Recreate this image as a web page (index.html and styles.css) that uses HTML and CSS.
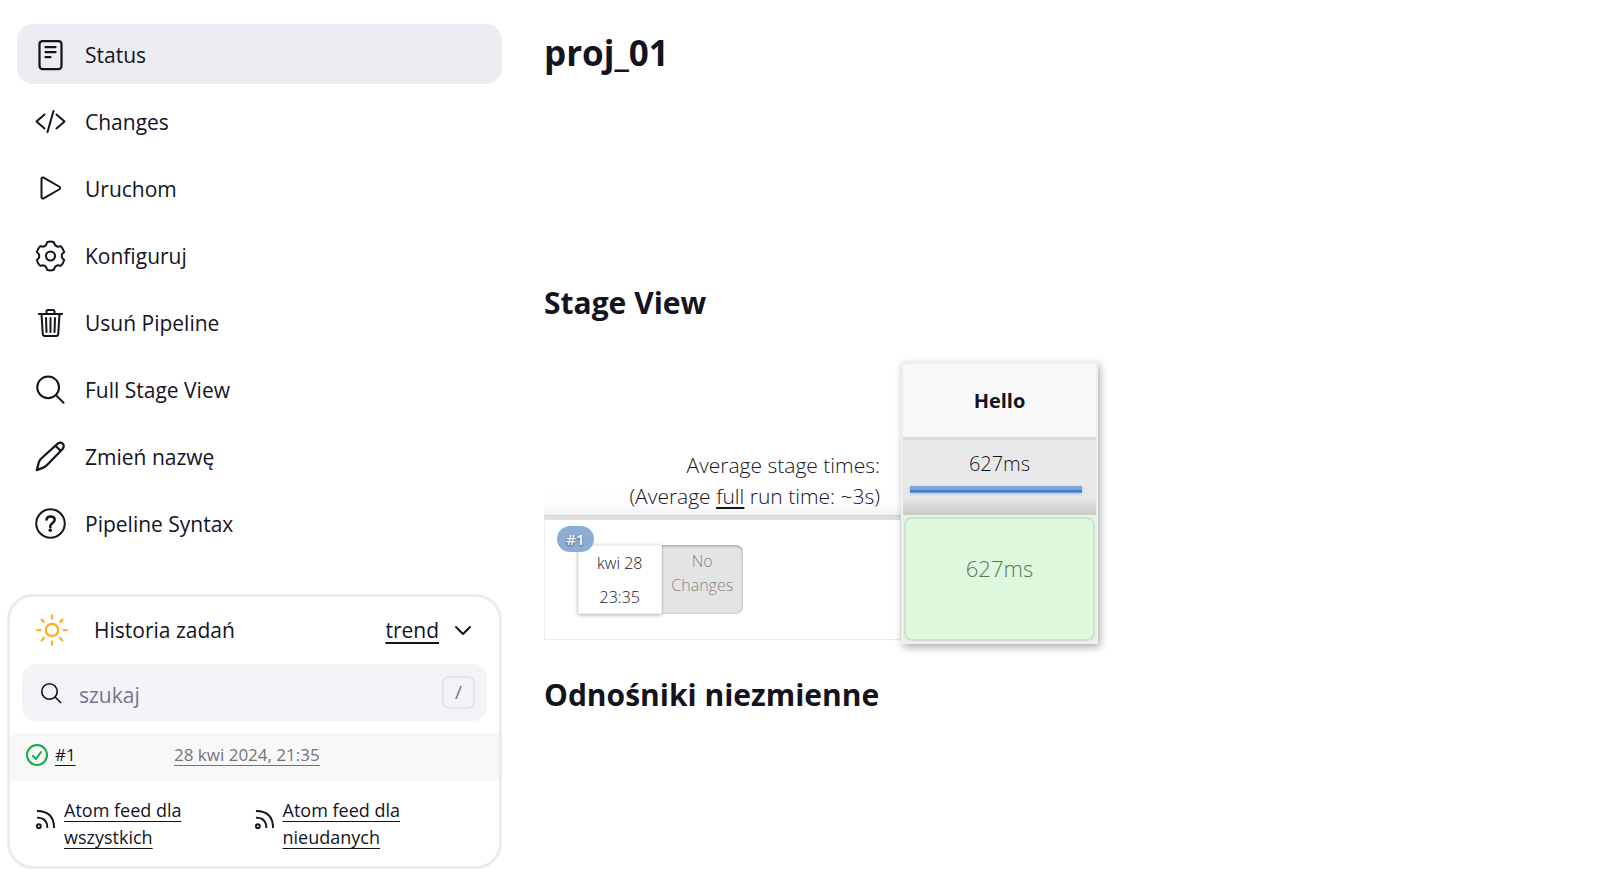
FILE: index.html
```html
<!DOCTYPE html>
<html lang="pl">
<head>
<meta charset="utf-8">
<meta name="viewport" content="width=device-width, initial-scale=1">
<title>proj_01</title>
<link rel="stylesheet" href="styles.css">
</head>
<body>
<div class="page">
  <aside class="side">
    <nav class="tasks">
      <a class="task task-active" href="#"><svg class="icon" viewBox="0 0 512 512"><rect x="88" y="32" width="352" height="448" rx="48" stroke-width="36"/><path d="M184 128h160M184 208h160M184 288h80" stroke-width="36"/></svg>Status</a>
      <a class="task" href="#"><svg class="icon" viewBox="0 0 512 512"><path d="M168 136L40 248l128 112M360 136l128 112-128 112M312 80l-96 336" stroke-width="32"/></svg>Changes</a>
      <a class="task" href="#"><svg class="icon" viewBox="0 0 512 512"><path d="M120 95v290c0 17 18 28 33 20l254-145c14-9 14-31 0-40L153 75c-15-8-33 3-33 20z" stroke-width="32"/></svg>Uruchom</a>
      <a class="task" href="#"><svg class="icon" viewBox="0 0 512 512"><path d="M209 35Q264 16 319 35L331 74Q350 102 385 108L428 98Q468 138 483 193L452 222Q436 256 452 290L483 319Q468 374 428 414L385 404Q350 410 331 438L319 477Q264 496 209 477L197 438Q178 410 143 404L100 414Q60 374 45 319L76 290Q92 256 76 222L45 193Q60 138 100 98L143 108Q178 102 197 74z" stroke-width="32"/><circle cx="264" cy="256" r="72" stroke-width="34"/></svg>Konfiguruj</a>
      <a class="task" href="#"><svg class="icon" viewBox="0 0 512 512"><path d="M120 112l20 320c1 18 14 32 32 32h184c18 0 31-14 32-32l20-320M78 112h372M200 112V72c0-13 11-24 24-24h80c13 0 24 11 24 24v40M264 176v224M192 176l8 224M336 176l-8 224" stroke-width="32"/></svg>Usuń Pipeline</a>
      <a class="task" href="#"><svg class="icon" viewBox="0 0 512 512"><circle cx="226" cy="213" r="174" stroke-width="32"/><path d="M351 338l122 122" stroke-width="32"/></svg>Full Stage View</a>
      <a class="task" href="#"><svg class="icon" viewBox="0 0 512 512"><path d="M44 466l32-122c7-24 19-41 36-60L366 53c28-32 66-38 92-12 28 28 22 64-8 94L212 380c-20 22-38 36-64 46zM344 76l84 84" stroke-width="36"/></svg>Zmień nazwę</a>
      <a class="task" href="#"><svg class="icon" viewBox="0 0 512 512"><circle cx="264" cy="248" r="228" stroke-width="32"/><path d="M200 186c4-38 32-52 66-52 36 0 65 20 65 54 0 28-18 42-38 56-22 15-33 28-33 54v8" stroke-width="40"/><circle cx="260" cy="356" r="28" fill="currentColor" stroke="none"/></svg>Pipeline Syntax</a>
    </nav>
    <section class="history">
      <header class="history-head">
        <svg class="icon sun" viewBox="0 0 512 512"><circle cx="256" cy="256" r="98" stroke-width="36"/><path d="M256 20v52M256 440v52M20 256h52M440 256h52M89 89l37 37M386 386l37 37M89 423l37-37M386 126l37-37" stroke-width="36"/></svg>
        <h2 class="history-title">Historia zadań</h2>
        <a class="trend" href="#">trend</a>
        <button class="toggle" type="button" aria-label="Zwiń"><svg class="chevron" viewBox="0 0 20 20"><path d="M3 7l7 7 7-7" stroke-width="2"/></svg></button>
      </header>
      <label class="search">
        <svg class="search-icon" viewBox="0 0 512 512"><circle cx="221" cy="221" r="180" stroke-width="38"/><path d="M350 350l128 128" stroke-width="38"/></svg>
        <input class="search-input" type="text" placeholder="szukaj" aria-label="szukaj">
        <kbd class="key">/</kbd>
      </label>
      <div class="build">
        <svg class="ok" viewBox="0 0 22 22"><circle cx="11" cy="11" r="10" stroke-width="2"/><path d="M7 12l3 3 5-7" stroke-width="2"/></svg>
        <a class="build-id" href="#">#1</a>
        <a class="build-date" href="#">28 kwi 2024, 21:35</a>
      </div>
      <footer class="feeds">
        <a class="feed" href="#"><svg class="rss" viewBox="0 0 20 20"><circle cx="3" cy="17" r="2"/><path d="M1 8q11 0 11 11M1 1q18 0 18 18"/></svg><span class="feed-text">Atom feed dla wszystkich</span></a>
        <a class="feed" href="#"><svg class="rss" viewBox="0 0 20 20"><circle cx="3" cy="17" r="2"/><path d="M1 8q11 0 11 11M1 1q18 0 18 18"/></svg><span class="feed-text">Atom feed dla nieudanych</span></a>
      </footer>
    </section>
  </aside>
  <main class="main">
    <h1 class="title">proj_01</h1>
    <h2 class="heading">Stage View</h2>
    <table class="stages">
      <thead>
        <tr><td class="blank"></td><th class="stage-name" scope="col">Hello</th></tr>
      </thead>
      <tbody>
        <tr>
          <th class="average" scope="row">Average stage times:<br>(Average <a class="full" href="#">full</a> run time: ~3s)</th>
          <td class="stage-average">627ms<div class="bar"></div></td>
        </tr>
        <tr>
          <td class="run">
            <div class="run-box">
              <div class="run-card">
                <a class="badge" href="#">#1</a>
                <div class="run-date"><span>kwi 28</span><span>23:35</span></div>
                <div class="run-changes">No<br>Changes</div>
              </div>
            </div>
          </td>
          <td class="stage-cell"><div class="success">627ms</div></td>
        </tr>
      </tbody>
    </table>
    <h2 class="heading">Odnośniki niezmienne</h2>
  </main>
</div>
</body>
</html>
```
FILE: styles.css
```css
* { box-sizing: border-box; }

body {
  margin: 0;
  background: #fff;
  color: #14141f;
  font: 500 21px/32px "Open Sans", "Noto Sans", sans-serif;
}

a { color: inherit; text-underline-offset: 4px; text-decoration-skip-ink: none; }
h1, h2 { margin: 0; }
svg { display: block; flex: none; fill: none; stroke: currentColor; stroke-linecap: round; stroke-linejoin: round; }

.page {
  display: grid;
  grid-template-columns: minmax(300px, 495px) minmax(0, 1fr);
  gap: 42px;
  padding: 24px 7px 16px;
}

/* Side panel */
.tasks { display: flex; flex-direction: column; gap: 7px; padding-left: 10px; }
.task {
  display: flex;
  align-items: center;
  gap: 19px;
  height: 60px;
  padding: 1px 17px 0;
  border-radius: 16px;
  text-decoration: none;
}
.task-active { background: #ecedf3; }
.icon { width: 32px; height: 32px; }

.history {
  margin-top: 41px;
  border: 3px solid #ebebf3;
  border-radius: 26px;
}
.history-head { display: flex; align-items: center; height: 67px; padding: 0 26px 2px; }
.history-title { flex: 1; margin-left: 26px; font-size: 21px; line-height: 32px; font-weight: 500; }
.sun { color: #ffb01f; }
.trend { text-decoration-thickness: 2px; }
.toggle { margin-left: 14px; padding: 0; border: 0; background: none; color: inherit; }
.chevron { width: 20px; height: 20px; }

.search {
  display: flex;
  align-items: center;
  height: 57px;
  margin: 0 12px 12px;
  padding: 0 12px 0 18px;
  border-radius: 14px;
  background: #f3f3f8;
}
.search-icon { width: 22px; height: 22px; }
.search-input {
  flex: 1;
  min-width: 0;
  margin-left: 17px;
  padding: 4px 0 0;
  border: 0;
  outline: 0;
  background: none;
  font: inherit;
}
.search-input::placeholder { color: #75758c; opacity: 1; }
.key {
  width: 33px;
  height: 33px;
  border: 2px solid #e4e4ee;
  border-radius: 7px;
  color: #75758c;
  font: 500 19px/28px "Open Sans", "Noto Sans", sans-serif;
  text-align: center;
}

.build {
  display: grid;
  grid-template-columns: 22px 112px 1fr;
  align-items: center;
  column-gap: 7px;
  height: 48px;
  padding: 0 16px 5px;
  background: #f8f8f8;
  font-size: 17px;
}
.ok { width: 22px; height: 22px; color: #1ea64b; }
.build-date { color: #73737d; }

.feeds {
  display: grid;
  grid-template-columns: 1fr 1fr;
  padding: 16px 26px 15px;
  column-gap: 0;
  font-size: 18px;
  line-height: 27px;
}
.feed { display: flex; align-items: center; gap: 9px; text-decoration: none; }
.feed-text { max-width: 130px; text-decoration: underline; text-underline-offset: 4px; }
.rss { width: 19px; height: 19px; margin-bottom: 10px; stroke-width: 2; stroke-linecap: butt; }

/* Main content */
.title { margin: 4px 0 198px; font-size: 35px; line-height: 50px; font-weight: 700; }
.heading { font-size: 30px; line-height: 54px; font-weight: 700; }

.stages {
  position: relative;
  width: 554px;
  max-width: 100%;
  margin: 32px 0 24px;
  border-spacing: 0;
  table-layout: fixed;
}
.stages::after {
  content: "";
  position: absolute;
  inset: 0 0 0 357px;
  box-shadow: 2px 3px 8px #0005;
  pointer-events: none;
}
.stages th, .stages td { padding: 0; vertical-align: top; }
.blank { width: 357px; }
.stages .stage-name {
  height: 75px;
  border: solid #efeff3;
  border-width: 2px 2px 0;
  background: #f8f8f8;
  font-size: 20px;
  font-weight: 700;
  vertical-align: middle;
}
.stages .average {
  height: 79px;
  padding: 13px 21px 0 0;
  border-bottom: 1px solid #d2d2d2;
  background: linear-gradient(#fff 70%, #fcfcfc 88%, #f1f1f1);
  font-weight: 300;
  line-height: 31px;
  text-align: right;
}
.full { text-decoration-thickness: 2px; text-underline-offset: 3px; }
.stages .stage-average {
  padding: 9px 0 0;
  border: solid #efeff3;
  border-width: 0 2px 1px;
  background: linear-gradient(#dcdcdc 3px, #e8e8e8 3px, #e8e8e8 60px, #c9c9c9);
  font-size: 20px;
  font-weight: 300;
  line-height: 36px;
  text-align: center;
}
.bar {
  height: 7px;
  margin: 4px 14px 0 7px;
  background: linear-gradient(#7da7d3 60%, #4a76cc 60%, #4a76cc 85%, #66a0e4 85%);
  box-shadow: 0 1px 3px #0003;
}
.run-box {
  height: 124px;
  padding: 25px 33px;
  border: 1px solid #ebebeb;
  border-top: 4px solid #dfdfdf;
}
.run-card { position: relative; display: flex; width: 165px; height: 69px; font-size: 16px; font-weight: 300; text-align: center; }
.badge {
  position: absolute;
  left: -21px;
  top: -19px;
  width: 37px;
  height: 26px;
  border-radius: 13px;
  background: #8aadd1;
  color: #fff;
  font-size: 15px;
  font-weight: 600;
  line-height: 26px;
  text-decoration: none;
  text-shadow: 0 1px 2px #0008;
}
.run-date { display: flex; flex-direction: column; flex: 1; border: 1px solid #f0f0f3; background: #fff; box-shadow: 0 1px 4px #0005; line-height: 34px; }
.run-changes {
  flex: 1;
  padding-top: 4px;
  border-radius: 0 7px 7px 0;
  background: #e4e4e4;
  box-shadow: inset 0 1px 3px #0005;
  color: #888;
  line-height: 24px;
}
.stages .stage-cell {
  height: 128px;
  padding: 1px;
  border: solid #efeff3;
  border-width: 0 2px 2px;
  background: #ddf8dd;
}
.success {
  height: 124px;
  padding-top: 33px;
  border: 2px solid #cfe0cf;
  border-radius: 8px;
  color: #5f705f;
  font-size: 22px;
  font-weight: 300;
  text-align: center;
}
```
